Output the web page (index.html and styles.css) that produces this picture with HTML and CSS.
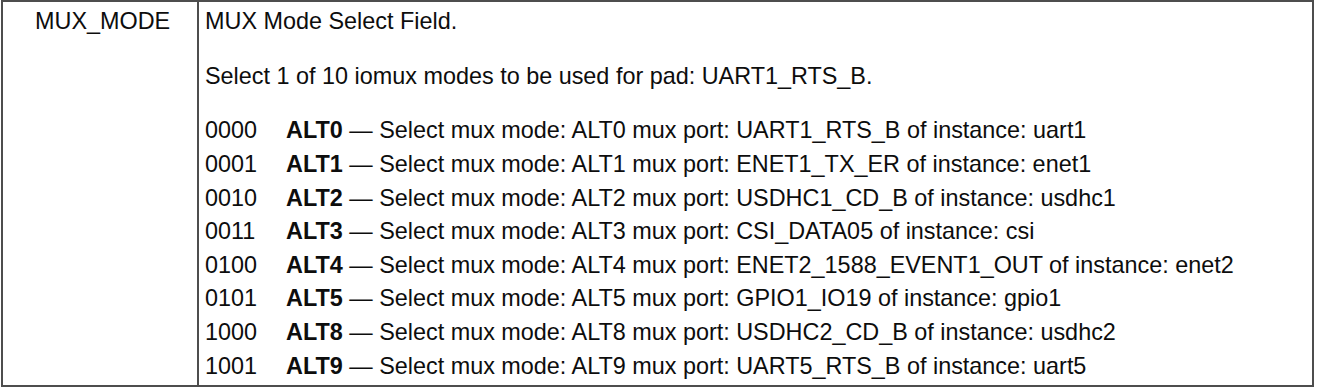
FILE: index.html
```html
<!DOCTYPE html>
<html lang="en">
<head>
<meta charset="utf-8">
<title>MUX_MODE</title>
<link rel="stylesheet" href="styles.css">
</head>
<body>
<div class="reg-table">
  <div class="field-name">MUX_MODE</div>
  <div class="field-desc">
    <p class="para">MUX Mode Select Field.</p>
    <p class="para">Select 1 of 10 iomux modes to be used for pad: UART1_RTS_B.</p>
    <div class="modes">
      <div class="mode"><span class="code">0000</span><span><b>ALT0</b> — Select mux mode: ALT0 mux port: UART1_RTS_B of instance: uart1</span></div>
      <div class="mode"><span class="code">0001</span><span><b>ALT1</b> — Select mux mode: ALT1 mux port: ENET1_TX_ER of instance: enet1</span></div>
      <div class="mode"><span class="code">0010</span><span><b>ALT2</b> — Select mux mode: ALT2 mux port: USDHC1_CD_B of instance: usdhc1</span></div>
      <div class="mode"><span class="code">0011</span><span><b>ALT3</b> — Select mux mode: ALT3 mux port: CSI_DATA05 of instance: csi</span></div>
      <div class="mode"><span class="code">0100</span><span><b>ALT4</b> — Select mux mode: ALT4 mux port: ENET2_1588_EVENT1_OUT of instance: enet2</span></div>
      <div class="mode"><span class="code">0101</span><span><b>ALT5</b> — Select mux mode: ALT5 mux port: GPIO1_IO19 of instance: gpio1</span></div>
      <div class="mode"><span class="code">1000</span><span><b>ALT8</b> — Select mux mode: ALT8 mux port: USDHC2_CD_B of instance: usdhc2</span></div>
      <div class="mode"><span class="code">1001</span><span><b>ALT9</b> — Select mux mode: ALT9 mux port: UART5_RTS_B of instance: uart5</span></div>
    </div>
  </div>
</div>
</body>
</html>
```

FILE: styles.css
```css
html, body {
  margin: 0;
  padding: 0;
  background: #ffffff;
}

body {
  font-family: "Liberation Sans", Arial, Helvetica, sans-serif;
  font-size: 23.4px;
  color: #0d0d0d;
}

.reg-table {
  box-sizing: border-box;
  width: 1313px;
  height: 387px;
  margin-left: 1px;
  border: 2px solid #4d4d4d;
  display: grid;
  grid-template-columns: 196px 1fr;
}

.field-name {
  border-right: 2px solid #4d4d4d;
  padding: 3.4px 0 0 32px;
  line-height: 33.6px;
}

.field-desc {
  padding: 3.4px 0 0 6px;
  line-height: 33.6px;
}

.para {
  margin: 0 0 20.9px 0;
}

.modes {
  display: flex;
  flex-direction: column;
}

.mode {
  display: flex;
  white-space: nowrap;
}

.code {
  width: 81px;
  flex: none;
}

b {
  font-weight: bold;
}
```
